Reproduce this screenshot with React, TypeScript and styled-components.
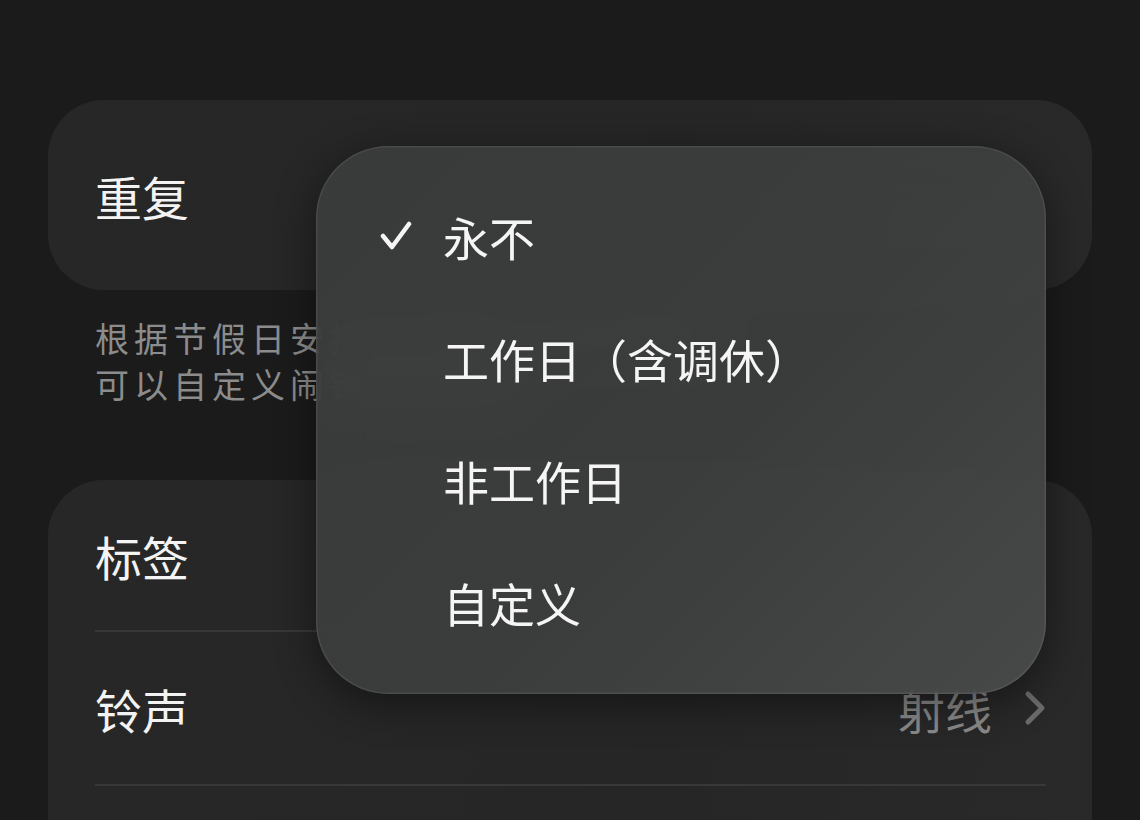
import styled, { createGlobalStyle } from "styled-components";

const GlobalStyle = createGlobalStyle`
  html, body {
    margin: 0;
    padding: 0;
    background: #1b1b1b;
  }
  body {
    font-family: "Noto Sans CJK SC", "Noto Sans", sans-serif;
    overflow: hidden;
  }
`;

const Page = styled.div`
  position: relative;
  width: 1140px;
  height: 820px;
  padding: 100px 48px 0;
  box-sizing: border-box;
  background: #1b1b1b;
  overflow: hidden;
`;

const Card = styled.div`
  background: linear-gradient(100deg, #272727 0%, #262626 60%, #292929 100%);
  border-radius: 56px;
  padding: 0 46px 0 47px;
  box-sizing: border-box;
`;

const Row = styled.div<{ $height: number }>`
  height: ${(p) => p.$height}px;
  display: flex;
  align-items: center;
  justify-content: space-between;
`;

const Label = styled.span`
  color: #f3f3f3;
  font-size: 47px;
  line-height: 1;
`;

const Divider = styled.div`
  height: 2px;
  background: #383838;
`;

const Note = styled.p`
  margin: 25px 0 73px;
  padding: 0 47px;
  color: #8c8c8c;
  font-size: 34px;
  line-height: 46px;
  letter-spacing: 5px;
  white-space: nowrap;
`;

const Value = styled.span`
  display: flex;
  align-items: center;
  gap: 32px;
  color: #8a8a8a;
  font-size: 47px;
  line-height: 1;
`;

const Menu = styled.div`
  position: absolute;
  left: 316px;
  top: 146px;
  width: 730px;
  height: 548px;
  box-sizing: border-box;
  padding: 29px 0 31px;
  border-radius: 72px;
  background: linear-gradient(135deg, rgba(60, 61, 61, 0.9) 0%, rgba(62, 63, 63, 0.9) 55%, rgba(74, 76, 75, 0.92) 100%);
  backdrop-filter: blur(26px);
  -webkit-backdrop-filter: blur(26px);
  box-shadow: 0 10px 40px rgba(0, 0, 0, 0.45), inset 0 0 0 1.5px rgba(255, 255, 255, 0.08);
`;

const MenuItem = styled.div`
  height: 122px;
  display: flex;
  align-items: center;
  padding-left: 64px;
`;

const CheckSlot = styled.span`
  width: 63px;
  display: flex;
  align-items: center;
`;

const ItemText = styled.span`
  color: #f5f5f5;
  font-size: 46px;
  line-height: 1;
`;

const Check = () => (
  <svg width="32" height="30" viewBox="0 0 32 30">
    <polyline
      points="3,15 12,26 29,3"
      fill="none"
      stroke="#f5f5f5"
      strokeWidth="4.5"
      strokeLinecap="round"
      strokeLinejoin="round"
    />
  </svg>
);

const Chevron = () => (
  <svg width="22" height="36" viewBox="0 0 22 36">
    <polyline
      points="4,4 18,18 4,32"
      fill="none"
      stroke="#6b6b6b"
      strokeWidth="5"
      strokeLinecap="round"
      strokeLinejoin="round"
    />
  </svg>
);

const options = ["永不", "工作日（含调休）", "非工作日", "自定义"];

export default function App() {
  return (
    <>
      <GlobalStyle />
      <Page>
        <Card>
          <Row $height={190}>
            <Label>重复</Label>
          </Row>
        </Card>
        <Note>
          根据节假日安排自动跳过法定节假日，
          <br />
          可以自定义闹钟重复规则
        </Note>
        <Card>
          <Row $height={150}>
            <Label>标签</Label>
          </Row>
          <Divider />
          <Row $height={152}>
            <Label>铃声</Label>
            <Value>
              射线
              <Chevron />
            </Value>
          </Row>
          <Divider />
          <Row $height={150} />
        </Card>
        <Menu>
          {options.map((o, i) => (
            <MenuItem key={o}>
              <CheckSlot>{i === 0 && <Check />}</CheckSlot>
              <ItemText>{o}</ItemText>
            </MenuItem>
          ))}
        </Menu>
      </Page>
    </>
  );
}
